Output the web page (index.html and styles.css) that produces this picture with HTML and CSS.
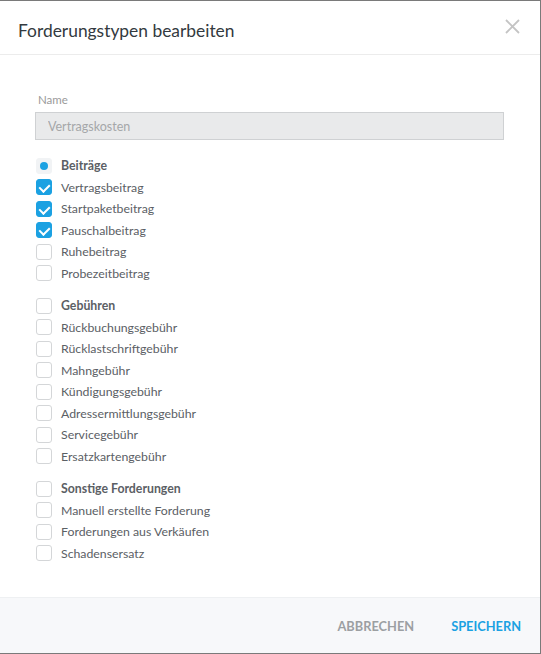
FILE: index.html
```html
<!DOCTYPE html>
<html lang="de">
<head>
  <meta charset="UTF-8">
  <title>Forderungstypen bearbeiten</title>
  <link rel="stylesheet" href="styles.css">
</head>
<body>
  <div class="modal">
    <div class="modal-header">
      <h2>Forderungstypen bearbeiten</h2>
      <button class="close" type="button" aria-label="Schließen">
        <svg width="15" height="15" viewBox="0 0 15 15">
          <path d="M1 1 L14 14 M14 1 L1 14" stroke="#c4c4c4" stroke-width="1.8" fill="none"/>
        </svg>
      </button>
    </div>

    <div class="modal-body">
      <label class="field-label" for="name">Name</label>
      <input id="name" class="field" type="text" value="Vertragskosten" disabled>

      <ul class="gruppe">
        <li class="kopf"><span class="box teil"></span>Beiträge</li>
        <li><span class="box an"></span>Vertragsbeitrag</li>
        <li><span class="box an"></span>Startpaketbeitrag</li>
        <li><span class="box an"></span>Pauschalbeitrag</li>
        <li><span class="box"></span>Ruhebeitrag</li>
        <li><span class="box"></span>Probezeitbeitrag</li>
      </ul>

      <ul class="gruppe">
        <li class="kopf"><span class="box"></span>Gebühren</li>
        <li><span class="box"></span>Rückbuchungsgebühr</li>
        <li><span class="box"></span>Rücklastschriftgebühr</li>
        <li><span class="box"></span>Mahngebühr</li>
        <li><span class="box"></span>Kündigungsgebühr</li>
        <li><span class="box"></span>Adressermittlungsgebühr</li>
        <li><span class="box"></span>Servicegebühr</li>
        <li><span class="box"></span>Ersatzkartengebühr</li>
      </ul>

      <ul class="gruppe">
        <li class="kopf"><span class="box"></span>Sonstige Forderungen</li>
        <li><span class="box"></span>Manuell erstellte Forderung</li>
        <li><span class="box"></span>Forderungen aus Verkäufen</li>
        <li><span class="box"></span>Schadensersatz</li>
      </ul>
    </div>

    <div class="modal-footer">
      <button class="btn abbrechen" type="button">Abbrechen</button>
      <button class="btn speichern" type="button">Speichern</button>
    </div>
  </div>
</body>
</html>
```

FILE: styles.css
```css
body {
  margin: 0;
  background: #7a7a7a;
  font-family: Lato, "Open Sans", sans-serif;
}

.modal {
  background: #fff;
  width: 540px;
  height: 652px;
  margin-top: 1px;
  display: flex;
  flex-direction: column;
}

.modal-header {
  height: 53px;
  border-bottom: 1px solid #ececec;
  display: flex;
  align-items: center;
  justify-content: space-between;
  padding: 0 20px 0 18px;
}

.modal-header h2 {
  margin: 0;
  font-size: 17.4px;
  font-weight: normal;
  color: #333a40;
  padding-top: 5px;
}

.close {
  background: none;
  border: none;
  padding: 0;
  cursor: pointer;
  margin-top: 1px;
}

.modal-body {
  flex: 1;
  padding: 38px 36px 0 35px;
}

.field-label {
  display: block;
  font-size: 11.5px;
  color: #9a9a9a;
  margin-left: 3px;
  margin-bottom: 6px;
}

.field {
  box-sizing: border-box;
  width: 469px;
  height: 28px;
  border: 1px solid #cfd1d3;
  background: #e9eaeb;
  font-family: inherit;
  font-size: 12.5px;
  color: #a5a7a9;
  padding: 0 12px;
}

.gruppe {
  list-style: none;
  margin: 0;
  padding: 0 0 0 1px;
}

.gruppe:first-of-type {
  margin-top: 15px;
}

.gruppe + .gruppe {
  margin-top: 11px;
}

.gruppe li {
  display: flex;
  align-items: center;
  height: 21.5px;
  font-size: 12.3px;
  color: #5b6065;
}

.gruppe li.kopf {
  font-weight: bold;
}

.box {
  box-sizing: border-box;
  width: 16px;
  height: 16px;
  border: 1px solid #d4d6d8;
  border-radius: 3px;
  background: #fff;
  margin-right: 9px;
  position: relative;
  flex-shrink: 0;
}

.box.an {
  background: #1ba1e2;
  border-color: #1ba1e2;
}

/* Haken */
.box.an::after {
  content: "";
  position: absolute;
  left: 4px;
  top: 2px;
  width: 5px;
  height: 8px;
  border: solid #fff;
  border-width: 0 2px 2px 0;
  transform: rotate(45deg);
}

.box.teil {
  background: #f1f3f5;
  border-color: #f1f3f5;
}

.box.teil::after {
  content: "";
  position: absolute;
  left: 3px;
  top: 3px;
  width: 8px;
  height: 8px;
  border-radius: 50%;
  background: #1ba1e2;
}

.modal-footer {
  height: 55px;
  background: #f7f8fa;
  border-top: 1px solid #eef0f2;
  display: flex;
  align-items: center;
  justify-content: flex-end;
  padding: 0 19px 0 0;
  gap: 37px;
}

.btn {
  background: none;
  border: none;
  padding: 0;
  font-family: inherit;
  font-size: 12.8px;
  font-weight: bold;
  letter-spacing: 0;
  text-transform: uppercase;
  cursor: pointer;
}

.abbrechen {
  color: #9c9fa2;
}

.speichern {
  color: #1ba1e2;
}
```
